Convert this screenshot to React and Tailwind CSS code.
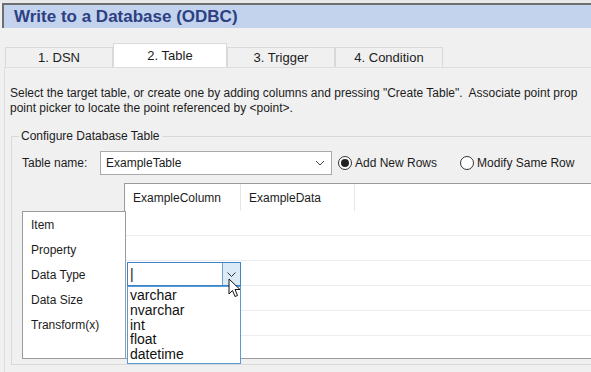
import React from 'react';

const tabs = ['1. DSN', '2. Table', '3. Trigger', '4. Condition'];
const rowLabels = ['Item', 'Property', 'Data Type', 'Data Size', 'Transform(x)'];
const types = ['varchar', 'nvarchar', 'int', 'float', 'datetime'];

const Radio = ({ checked, label }) => (
  <label className="flex items-center gap-[3px]">
    <span className="w-[14px] h-[14px] rounded-full border border-[#333] bg-white flex items-center justify-center">
      {checked && <span className="w-[8px] h-[8px] rounded-full bg-[#222]" />}
    </span>
    <span>{label}</span>
  </label>
);

const Cursor = () => (
  <svg width="14" height="21" viewBox="0 0 14 21" className="absolute left-[228px] top-[278px]">
    <path d="M1 1 L1 16 L4.5 12.5 L7 18.5 L9.5 17.5 L7 11.5 L12 11.5 Z" fill="#fff" stroke="#111" strokeWidth="1" strokeLinejoin="round" />
  </svg>
);

export default function App() {
  return (
    <div className="relative w-[591px] h-[372px] overflow-hidden bg-[#f0f0f0] text-[12px] text-[#1c1c1c] font-['Liberation_Sans',Arial,sans-serif]">
      <div className="h-[3px] bg-[#e9e9e9]" />
      {/* title bar */}
      <div className="h-[25px] ml-[2px] bg-[#c3d3ee] border-t-2 border-l-2 border-[#6e6e6e] flex items-center pl-[10px] text-[17px] font-bold text-[#2d4082] whitespace-nowrap">
        Write to a Database (ODBC)
      </div>

      {/* tabs */}
      <div className="mt-[15px] pl-[5px] h-[24px] flex items-end">
        {tabs.map((t, i) => (
          <div
            key={t}
            className={
              i === 1
                ? 'w-[114px] h-[24px] bg-white border border-b-0 border-[#d9d9d9] flex items-center justify-center text-[13px]'
                : 'w-[108px] h-[20px] bg-[#f0f0f0] border border-b-0 border-[#d9d9d9] flex items-center justify-center text-[13px]'
            }
          >
            {t}
          </div>
        ))}
      </div>

      {/* tab page */}
      <div className="ml-[4px] border-l border-t border-[#dedede] bg-[#f0f0f0] h-[310px]">
        <div className="pt-[18px] pl-[5px] leading-[15px] whitespace-nowrap">
          <div>Select the target table, or create one by adding columns and pressing "Create Table".&nbsp; Associate point prop</div>
          <div>point picker to locate the point referenced by &lt;point&gt;.</div>
        </div>

        {/* group box */}
        <div className="relative mt-[20px] ml-[6px] w-[600px] h-[229px] border border-[#d8d8d8]">
          <span className="absolute -top-[9px] left-[7px] px-[2px] bg-[#f0f0f0] leading-[16px]">Configure Database Table</span>

          <div className="flex items-center mt-[14px] pl-[10px] h-[24px] whitespace-nowrap">
            <span className="w-[78px]">Table name:</span>
            <div className="w-[232px] h-[24px] bg-white border border-[#a9a9a9] flex items-center justify-between pl-[5px] pr-[6px]">
              <span>ExampleTable</span>
              <svg width="10" height="6" viewBox="0 0 10 6"><path d="M1 1 L5 5 L9 1" fill="none" stroke="#444" strokeWidth="1" /></svg>
            </div>
            <div className="ml-[6px]"><Radio checked label="Add New Rows" /></div>
            <div className="ml-[23px]"><Radio label="Modify Same Row" /></div>
          </div>

          {/* grid */}
          <div className="relative mt-[8px] ml-[10px]">
            <div className="flex h-[28px]">
              <div className="w-[102px]" />
              <div className="flex-1 flex bg-white border-t border-l border-[#9a9a9a]">
                <div className="w-[116px] h-[27px] pl-[8px] flex items-center border-r border-[#e6e6e6]">ExampleColumn</div>
                <div className="w-[114px] h-[27px] pl-[8px] flex items-center border-r border-[#e6e6e6]">ExampleData</div>
              </div>
            </div>
            <div className="flex h-[148px]">
              <div className="w-[103px] bg-white border border-r-0 border-[#9a9a9a]">
                {rowLabels.map((r) => (
                  <div key={r} className="h-[25px] pl-[8px] flex items-center">{r}</div>
                ))}
              </div>
              <div className="relative flex-1 bg-white border-l border-b border-[#9a9a9a]">
                {rowLabels.map((r) => (
                  <div key={r} className="h-[25px] border-b border-[#ededed]" />
                ))}

                {/* open combo box */}
                <div className="absolute left-[1px] top-[51px] w-[114px]">
                  <div className="h-[24px] flex border border-[#3d84c6] bg-white">
                    <div className="flex-1 flex items-center pl-[2px] text-[14px] font-light">|</div>
                    <div className="w-[18px] bg-[#dbeaf7] border-l border-[#6fa3d4] flex items-center justify-center">
                      <svg width="9" height="5" viewBox="0 0 9 5"><path d="M0.5 0.5 L4.5 4.5 L8.5 0.5" fill="none" stroke="#333" strokeWidth="1" /></svg>
                    </div>
                  </div>
                  <div className="bg-white border border-[#5b9bd5] pl-[2px] pt-[1px] pb-[1px] text-[14px] leading-[14.8px] text-[#111]">
                    {types.map((t) => (
                      <div key={t}>{t}</div>
                    ))}
                  </div>
                </div>
              </div>
            </div>
          </div>
        </div>
      </div>
      <Cursor />
    </div>
  );
}
